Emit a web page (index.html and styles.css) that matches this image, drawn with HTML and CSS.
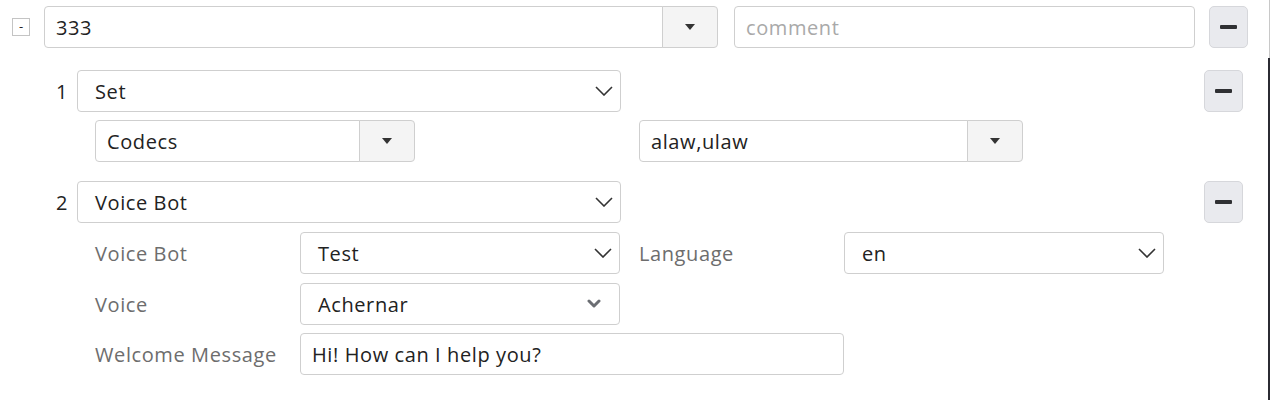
FILE: index.html
```html
<!DOCTYPE html>
<html>
<head>
<meta charset="utf-8">
<link rel="stylesheet" href="styles.css">
</head>
<body>
<div class="frame">
  <div class="head-row">
    <span class="toggle">-</span>
    <div class="group main-group">
      <div class="field grow">333</div>
      <div class="caret-btn"><span class="tri"></span></div>
    </div>
    <div class="field comment placeholder">comment</div>
    <div class="minus-btn"><span class="dash"></span></div>
  </div>

  <div class="action-row first">
    <span class="num">1</span>
    <div class="field select action-select">Set<svg class="chev" viewBox="0 0 18 10"><path d="M1 1 L9 9 L17 1" fill="none" stroke="#333" stroke-width="1.6"/></svg></div>
    <div class="minus-btn push"><span class="dash"></span></div>
  </div>
  <div class="sub-row">
    <div class="group codec-group">
      <div class="field grow">Codecs</div>
      <div class="caret-btn"><span class="tri"></span></div>
    </div>
    <div class="group value-group">
      <div class="field grow">alaw,ulaw</div>
      <div class="caret-btn"><span class="tri"></span></div>
    </div>
  </div>

  <div class="action-row second">
    <span class="num">2</span>
    <div class="field select action-select">Voice Bot<svg class="chev" viewBox="0 0 18 10"><path d="M1 1 L9 9 L17 1" fill="none" stroke="#333" stroke-width="1.6"/></svg></div>
    <div class="minus-btn push"><span class="dash"></span></div>
  </div>
  <div class="params">
    <div class="param-row">
      <span class="label">Voice Bot</span>
      <div class="field select param-select">Test<svg class="chev" viewBox="0 0 18 10"><path d="M1 1 L9 9 L17 1" fill="none" stroke="#333" stroke-width="1.6"/></svg></div>
      <span class="label lang">Language</span>
      <div class="field select param-select">en<svg class="chev" viewBox="0 0 18 10"><path d="M1 1 L9 9 L17 1" fill="none" stroke="#333" stroke-width="1.6"/></svg></div>
    </div>
    <div class="param-row">
      <span class="label">Voice</span>
      <div class="field select param-select">Achernar<svg class="chev bold" viewBox="0 0 14 10"><path d="M2 2 L7 7 L12 2" fill="none" stroke="#6b6e73" stroke-width="3" stroke-linecap="round" stroke-linejoin="round"/></svg></div>
    </div>
    <div class="param-row">
      <span class="label">Welcome Message</span>
      <div class="field welcome">Hi! How can I help you?</div>
    </div>
  </div>
</div>
</body>
</html>
```
FILE: styles.css
```css
html, body {
  margin: 0;
  padding: 0;
  background: #fff;
}
body {
  font-family: "Open Sans", "Lato", sans-serif;
  font-size: 20px;
  letter-spacing: 0.6px;
  color: #222;
}
.frame {
  position: relative;
  width: 1270px;
  height: 400px;
  box-sizing: border-box;
  overflow: hidden;
}
.frame::after {
  content: "";
  position: absolute;
  right: 0;
  top: 58px;
  bottom: 0;
  width: 2px;
  background: #2b2b33;
}
.frame::before {
  content: "";
  position: absolute;
  right: 0;
  top: 0;
  height: 58px;
  width: 1px;
  background: #c8c8c8;
}
.field {
  box-sizing: border-box;
  height: 42px;
  border: 1px solid #cfcfcf;
  border-radius: 4px;
  padding: 1px 12px 0 11px;
  display: flex;
  align-items: center;
  background: #fff;
  white-space: nowrap;
}
.placeholder { color: #a9a9a9; }
.group { display: flex; }
.group .grow {
  flex: 1;
  border-top-right-radius: 0;
  border-bottom-right-radius: 0;
}
.caret-btn {
  box-sizing: border-box;
  width: 56px;
  height: 42px;
  margin-left: -1px;
  border: 1px solid #cfcfcf;
  border-radius: 0 4px 4px 0;
  background: #f4f4f4;
  display: flex;
  align-items: center;
  justify-content: center;
}
.tri {
  width: 0;
  height: 0;
  border-left: 5.5px solid transparent;
  border-right: 5.5px solid transparent;
  border-top: 6px solid #333;
}
.minus-btn {
  box-sizing: border-box;
  width: 39px;
  height: 42px;
  border: 1px solid #d6d7db;
  border-radius: 5px;
  background: #e9eaee;
  display: flex;
  align-items: center;
  justify-content: center;
}
.dash {
  width: 17px;
  height: 4px;
  border-radius: 1px;
  background: #2f3033;
}
.head-row {
  display: flex;
  align-items: center;
  padding-top: 6px;
  padding-left: 12px;
}
.toggle {
  box-sizing: border-box;
  width: 18px;
  height: 18px;
  border: 1px solid #c4c4c4;
  font-size: 13px;
  letter-spacing: 0;
  line-height: 15px;
  text-align: center;
  color: #222;
  margin-right: 14px;
}
.main-group { width: 674px; }
.comment { width: 461px; margin-left: 16px; }
.head-row .minus-btn { margin-left: 14px; }
.action-row {
  display: flex;
  align-items: center;
  padding-left: 56px;
}
.action-row.first { margin-top: 22px; }
.action-row.second { margin-top: 19px; }
.num {
  width: 21px;
}
.select {
  justify-content: space-between;
  padding-left: 17px;
  padding-right: 7px;
}
.action-select { width: 544px; }
.chev { width: 18px; height: 10px; margin-top: -1px; }
.chev.bold { width: 14px; height: 10px; margin-right: 11px; }
.push { margin-left: auto; margin-right: 27px; }
.sub-row {
  display: flex;
  margin-top: 8px;
  padding-left: 95px;
}
.codec-group { width: 320px; }
.value-group { width: 384px; margin-left: 224px; }
.params {
  margin-top: 9px;
  padding-left: 95px;
  display: flex;
  flex-direction: column;
  gap: 9px;
}
.param-row {
  display: flex;
  align-items: center;
}
.param-row:last-child { margin-top: -1px; }
.label {
  width: 205px;
  color: #6d6d6d;
}
.label.lang {
  width: 205px;
  margin-left: 19px;
}
.param-select { width: 320px; }
.welcome { width: 544px; }
```
